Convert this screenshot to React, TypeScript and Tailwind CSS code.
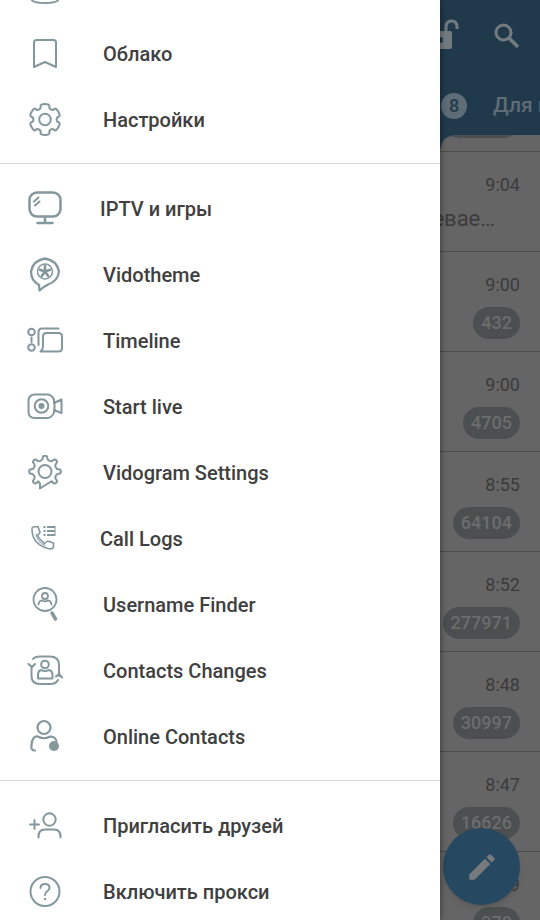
import type { ReactNode } from 'react';

type Item = {
  label: string;
  icon: ReactNode;
  // some rows ship a slightly narrower icon slot
  tight?: boolean;
};

type Chat = {
  time: string;
  count?: string;
  text?: string;
};

function Icon({ children, width = 2 }: { children: ReactNode; width?: number }) {
  return (
    <svg
      className="size-9 shrink-0 text-[#84979d]"
      viewBox="0 0 36 36"
      fill="none"
      stroke="currentColor"
      strokeWidth={width}
      strokeLinecap="round"
      strokeLinejoin="round"
      aria-hidden="true"
    >
      {children}
    </svg>
  );
}

// Soft gear outline: corner points of every tooth, smoothed through their midpoints
function gearPath(cy: number, start: number, step: number, count: number, outer: number, inner: number, tip: number, base: number) {
  const pts: number[][] = [];
  const add = (r: number, deg: number) => {
    const a = (deg * Math.PI) / 180;
    pts.push([18 + r * Math.cos(a), cy + r * Math.sin(a)]);
  };
  for (let i = 0; i < count; i++) {
    const mid = start + i * step;
    add(inner, mid - base);
    add(outer, mid - tip);
    add(outer, mid + tip);
    add(inner, mid + base);
  }
  const closed = step * count === 360;
  const fmt = (p: number[]) => `${p[0].toFixed(2)} ${p[1].toFixed(2)}`;
  const between = (a: number[], b: number[]) => [(a[0] + b[0]) / 2, (a[1] + b[1]) / 2];
  const last = pts[pts.length - 1];
  let d = `M${fmt(closed ? between(last, pts[0]) : pts[0])}`;
  pts.forEach((p, i) => {
    const next = pts[i + 1] ?? (closed ? pts[0] : p);
    d += `Q${fmt(p)} ${fmt(between(p, next))}`;
  });
  return d;
}

const topItems: Item[] = [
  {
    label: '',
    icon: (
      <Icon>
        <circle cx="18" cy="10" r="7" />
        <path d="M4 28Q4 22 18 22Q32 22 32 28Q32 33 18 33Q4 33 4 28Z" />
      </Icon>
    ),
  },
  {
    label: 'Облако',
    icon: (
      <Icon>
        <path d="M7 31V6.500Q7 4 9.500 4H26.500Q29 4 29 6.500V31L18 26Z" />
      </Icon>
    ),
  },
  {
    label: 'Настройки',
    icon: (
      <Icon>
        <circle cx="18" cy="17.500" r="5.800" />
        <path d={gearPath(17.5, -90, 60, 6, 16.2, 11.8, 18, 19)} />
      </Icon>
    ),
  },
];

const vidogramItems: Item[] = [
  {
    label: 'IPTV и игры',
    tight: true,
    icon: (
      <Icon width={2.5}>
        <rect x="2.500" y="1.500" width="31" height="24" rx="7.500" />
        <path d="M18 26V31.500M10.500 32H25.500" />
        <path d="M7 10.500L11.500 6.500M8 14.500L12.500 10.500" strokeWidth="2" />
      </Icon>
    ),
  },
  {
    label: 'Vidotheme',
    icon: (
      <Icon>
        <path d="M12.500 33.500L12 28Q4 23.500 4 14.500Q6 3.500 18 1.500Q30 3.500 32 14.500Q31 24 21 27.500Q16 30 12.500 33.500Z" strokeWidth="2.300" />
        <circle cx="18" cy="14.500" r="7.500" strokeWidth="1.500" />
        <path d="M18 14.500V9M18 14.500L23.200 12.800M18 14.500L21.200 19M18 14.500L14.800 19M18 14.500L12.800 12.800" strokeWidth="2.600" />
      </Icon>
    ),
  },
  {
    label: 'Timeline',
    icon: (
      <Icon>
        <circle cx="4.500" cy="9" r="3.300" />
        <circle cx="4.500" cy="24.500" r="3.300" />
        <path d="M4.500 14.500V19M11.500 22V9Q11.500 5.500 15 5.500H31.500" />
        <path d="M13.500 28.500Q16 26.500 16 23V13.500Q16 10 19.500 10H31.500Q35 10 35 13.500V25Q35 28.500 31.500 28.500Z" />
      </Icon>
    ),
  },
  {
    label: 'Start live',
    icon: (
      <Icon>
        <path d="M8 5.500H20Q24.500 5.500 27 10.500V14L34.500 10.500V24L27 21V23.500Q25 29 20 29H8Q1.500 29 1.500 22.500V12Q1.500 5.500 8 5.500Z" />
        <path d="M27.500 14V21" />
        <circle cx="14.500" cy="17" r="6.800" />
        <circle cx="14.500" cy="17" r="3" fill="currentColor" stroke="none" />
      </Icon>
    ),
  },
  {
    label: 'Vidogram Settings',
    icon: (
      <Icon>
        <circle cx="18" cy="16.500" r="6.500" />
        <path d={`${gearPath(16.5, 135, 45, 7, 16, 11.8, 8, 11)}L20 29L13 33.500V28.500Z`} />
      </Icon>
    ),
  },
  {
    label: 'Call Logs',
    tight: true,
    icon: (
      <Icon width={1.6}>
        <path d="M6 6L11 5.500L13 11.500L10.500 14.500Q12.500 19 17.500 22.500L20.500 20L26.500 22V26.500Q25 28.500 21 27.500Q5 23 5 8Q5 6 6 6Z" />
        <path d="M9 13Q10 21 18 24.500" strokeWidth="1" />
        <path d="M16.500 6H18.500M20 6H28M16.500 10H18.500M20 10H28M16.500 14H18.500M20 14H28" strokeWidth="2" strokeLinecap="butt" />
        <path d="M28 5.500V14.500" strokeWidth="1" />
      </Icon>
    ),
  },
  {
    label: 'Username Finder',
    icon: (
      <Icon width={1.8}>
        <circle cx="18" cy="12.500" r="11.500" />
        <circle cx="18" cy="9" r="3" />
        <path d="M11.500 17.500Q12 13.500 15 13.300Q18 15.500 21 13.300Q24 13.500 24.500 17.500" />
        <path d="M25 26L28.500 32" strokeWidth="3.500" />
      </Icon>
    ),
  },
  {
    label: 'Contacts Changes',
    icon: (
      <Icon>
        <path d="M6 6Q8 3.500 13 3.500H23Q32 3.500 32 12V23M31 27Q29 31 23 31H13Q4.500 31 4.500 23V13" />
        <path d="M1.500 11L5 14L8 11M29 23.500L32 21L35 24.500" />
        <circle cx="18" cy="11.500" r="3.800" />
        <path d="M11 25.500V22Q11 17.500 14.500 17Q18 19.500 21.500 17Q25.500 17.500 25.500 22V25.500Z" />
      </Icon>
    ),
  },
  {
    label: 'Online Contacts',
    icon: (
      <Icon width={2.2}>
        <circle cx="17" cy="8.500" r="6.500" />
        <path d="M8 31.500Q3.500 31.500 4.500 26Q5 17 11 17.500Q17 21 23 17.500Q28 17.500 29.500 22" />
        <circle cx="27" cy="27" r="5" fill="currentColor" stroke="none" />
      </Icon>
    ),
  },
];

const bottomItems: Item[] = [
  {
    label: 'Пригласить друзей',
    icon: (
      <Icon>
        <path d="M3 16.500H12M7.500 12V21" />
        <circle cx="22.500" cy="11.500" r="6.200" />
        <path d="M11.500 29.500Q11 21.500 18 21.500H27Q34 21.500 33.500 29.500" />
      </Icon>
    ),
  },
  {
    label: 'Включить прокси',
    icon: (
      <Icon>
        <circle cx="18" cy="17.500" r="14.500" />
        <path d="M13.500 14Q13.500 10 18 10Q22.500 10 22.500 13.700Q22.500 15.500 20.500 17Q18 18.500 18 21" />
        <path d="M18 25V25.100" strokeWidth="2.500" />
      </Icon>
    ),
  },
];

const chats: Chat[] = [
  { time: '9:04', text: 'Подозревае…' },
  { time: '9:00', count: '432' },
  { time: '9:00', count: '4705' },
  { time: '8:55', count: '64104' },
  { time: '8:52', count: '277971' },
  { time: '8:48', count: '30997' },
  { time: '8:47', count: '16626' },
  { time: '8:39', count: '378' },
];

function Section({ items }: { items: Item[] }) {
  return (
    <ul className="pt-3 pb-2.5">
      {items.map((item) => (
        <li key={item.label}>
          <a
            href="#"
            className={
              item.tight
                ? 'flex h-[66px] items-center gap-[37px] pl-[27px]'
                : 'flex h-[66px] items-center gap-10 pl-[27px]'
            }
          >
            {item.icon}
            <span>{item.label}</span>
          </a>
        </li>
      ))}
    </ul>
  );
}

function ChatRow({ chat }: { chat: Chat }) {
  return (
    <li className="flex h-[100px] flex-col items-end border-t border-[#4c4c4c] pt-5 pr-5">
      <span className="text-lg leading-[26px] text-[#3b3b3b]">{chat.time}</span>
      {chat.count && (
        <span className="mt-[9px] flex h-8 items-center rounded-full bg-[#4b4f50] px-2 text-lg font-medium text-[#6b6d6d]">
          {chat.count}
        </span>
      )}
      {chat.text && (
        <span className="mt-[5px] pr-[25px] text-[22px] leading-8 text-[#3c3c3c]">{chat.text}</span>
      )}
    </li>
  );
}

export default function App() {
  return (
    <div className="relative h-screen overflow-hidden bg-[#656565] font-[Roboto,sans-serif]">
      <main>
        <header className="relative h-[135px] bg-[#203a4c] text-[#747b80]">
          <div className="flex h-[70px] items-center justify-end gap-[34px] pr-5">
            <button type="button" aria-label="Блокировка">
              <svg className="h-9 w-[34px]" viewBox="0 0 34 36" aria-hidden="true">
                <path d="M21 16V10Q21 4 26.500 4Q32 4 32 10V12" fill="none" stroke="currentColor" strokeWidth="3" />
                <rect x="2" y="14" width="25" height="18" rx="2" fill="currentColor" />
                <circle cx="15" cy="23" r="3" fill="#203a4c" />
              </svg>
            </button>
            <button type="button" aria-label="Поиск">
              <svg className="size-[27px]" viewBox="0 0 27 27" fill="none" stroke="currentColor" strokeWidth="3" aria-hidden="true">
                <circle cx="10.500" cy="10.500" r="7.500" />
                <path d="M16 16L25 25" strokeWidth="3.500" />
              </svg>
            </button>
          </div>
          <nav className="flex h-[65px] items-center justify-end pt-1.5 text-[21px] font-medium">
            <span className="flex size-[26px] shrink-0 items-center justify-center rounded-full bg-[#5d6c76] text-lg text-[#203a4c]">
              8
            </span>
            <a href="#" className="ml-[26px] w-[47px] shrink-0 overflow-hidden whitespace-nowrap text-[#5d6c76]">
              Для меня
            </a>
          </nav>
          {/* concave corner under the bar */}
          <span className="absolute top-full right-[87px] size-[13px] bg-[radial-gradient(circle_at_bottom_right,transparent_11px,#203a4c_13px)]" />
        </header>
        {/* tail of the row scrolled under the bar */}
        <div className="flex h-4 justify-end pr-5">
          <span className="-mt-[29px] h-8 w-[76px] rounded-full bg-[#4b4f50] [clip-path:inset(29px_0_0_0)]" />
        </div>
        <ul>
          {chats.map((chat) => (
            <ChatRow key={chat.time + chat.count} chat={chat} />
          ))}
        </ul>
      </main>

      <button
        type="button"
        aria-label="Написать"
        className="absolute right-5 bottom-[15px] flex size-[77px] items-center justify-center rounded-full bg-[#264860] text-[#777b7e] shadow-md"
      >
        <svg className="size-[34px]" viewBox="0 0 24 24" fill="currentColor" aria-hidden="true">
          <path d="M3 17.250V21h3.750L17.810 9.940l-3.750-3.750zM20.710 7.040a1 1 0 0 0 0-1.410l-2.340-2.340a1 1 0 0 0-1.410 0l-1.830 1.830 3.750 3.750z" />
        </svg>
      </button>

      <aside className="absolute inset-y-0 left-0 right-[100px] overflow-hidden bg-white text-xl font-medium text-[#404040] shadow-[1px_0_6px_rgba(0,0,0,0.4)]">
        <nav className="-mt-[57px] divide-y divide-[#d6d6d6]">
          <Section items={topItems} />
          <Section items={vidogramItems} />
          <Section items={bottomItems} />
        </nav>
      </aside>
    </div>
  );
}
